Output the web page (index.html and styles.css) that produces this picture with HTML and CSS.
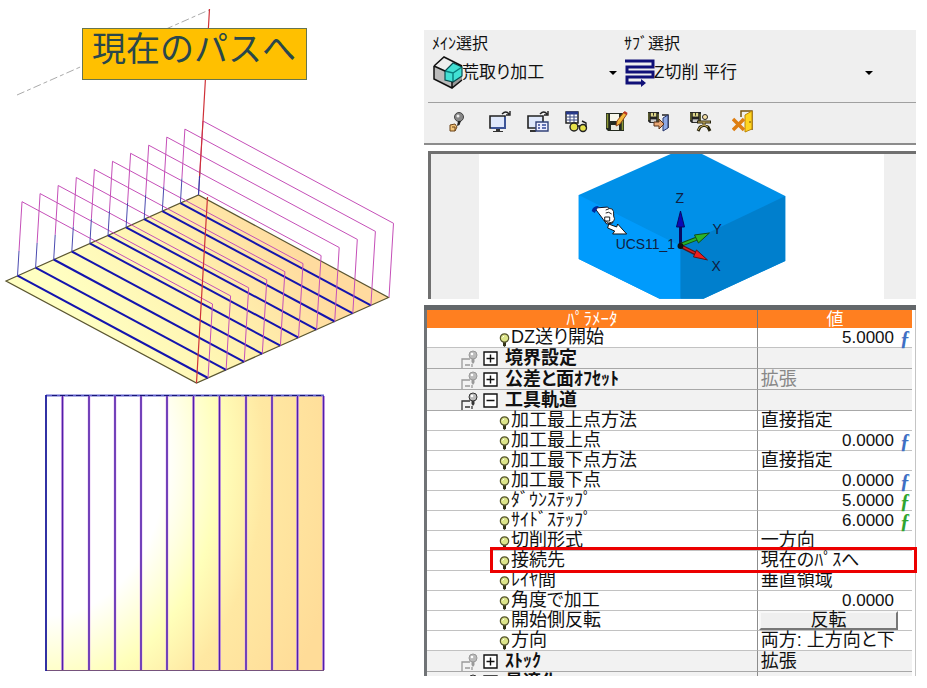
FILE: index.html
```html
<!DOCTYPE html>
<html lang="ja">
<head>
<meta charset="utf-8">
<title>現在のパスへ</title>
<link rel="stylesheet" href="styles.css">
</head>
<body>
<main class="page">
  <section class="figure">
    <h1 class="callout">現在のパスへ</h1>
    <svg class="drawing" viewBox="0 0 424 688" aria-hidden="true">
      <defs>
        <linearGradient id="plate" gradientUnits="userSpaceOnUse" x1="90" y1="330" x2="270" y2="210">
          <stop offset="0" stop-color="#ffffc2"/><stop offset=".5" stop-color="#fff3b0"/><stop offset="1" stop-color="#ffdb9f"/>
        </linearGradient>
        <radialGradient id="sheet" gradientUnits="userSpaceOnUse" cx="0" cy="0" r="1" gradientTransform="translate(46 460) scale(300 390)">
          <stop offset="0" stop-color="#fff"/><stop offset=".4" stop-color="#fff"/><stop offset=".58" stop-color="#ffffba"/><stop offset=".73" stop-color="#ffe8a2"/><stop offset="1" stop-color="#ffdc98"/>
        </radialGradient>
        <g id="retract" fill="none">
          <path d="M19 251 22 201.7 212.5 304 208 378" stroke="#c54fb8"/>
          <path d="M17.5 275.7 19 251" stroke="#4b4bb0"/>
        </g>
        <path id="cut" d="M17.5 275.7 208 378" stroke="#1414ae" stroke-width="2"/>
      </defs>
      <path d="M6 281 198.5 195 388.5 297.5 196.5 383Z" fill="url(#plate)" stroke="#5a5530" stroke-width="1.2"/>
      <path d="M17 95 209 10" stroke="#aaa" stroke-dasharray="8 3 4 3"/>
      <use href="#cut"/><use href="#cut" x="18.1" y="-8.1"/><use href="#cut" x="36.2" y="-16.2"/><use href="#cut" x="54.3" y="-24.2"/><use href="#cut" x="72.4" y="-32.3"/><use href="#cut" x="90.5" y="-40.4"/><use href="#cut" x="108.6" y="-48.4"/><use href="#cut" x="126.7" y="-56.5"/><use href="#cut" x="144.8" y="-64.6"/><use href="#cut" x="162.9" y="-72.6"/>
      <use href="#retract"/><use href="#retract" x="18.1" y="-8.1"/><use href="#retract" x="36.2" y="-16.2"/><use href="#retract" x="54.3" y="-24.2"/><use href="#retract" x="72.4" y="-32.3"/><use href="#retract" x="90.5" y="-40.4"/><use href="#retract" x="108.6" y="-48.4"/><use href="#retract" x="126.7" y="-56.5"/><use href="#retract" x="144.8" y="-64.6"/><use href="#retract" x="162.9" y="-72.6"/><use href="#retract" x="181" y="-80.7"/>
      <path d="M209.5 9 203 121 199.5 178M207.5 197 196.5 383" fill="none" stroke="#cf3138" stroke-width="1.2"/>
      <path d="M199.5 176 198.5 195" stroke="#3b35a4"/>
      <path d="M46 396H323V670H46Z" fill="url(#sheet)"/>
      <path d="M46 670.5H324" stroke="#76527c"/>
      <path d="M46 395.5H324" stroke="#6060cc" stroke-width="2"/>
      <path d="M52 395.5H324" stroke="#171778" stroke-dasharray="5 3"/>
      <path d="M62.5 396V670M89 396V670M115 396V670M141 396V670M167 396V670M193.5 396V670M219.5 396V670M246 396V670M272 396V670M297.5 396V670M323.5 396V670" stroke="#dca8f0" stroke-width="2.6"/>
      <path d="M62.5 396V670M89 396V670M115 396V670M141 396V670M167 396V670M193.5 396V670M219.5 396V670M246 396V670M272 396V670M297.5 396V670M323.5 396V670" stroke="#5020a8" stroke-width="1.5"/>
      <path d="M46 395V671" stroke="#1b1b9b" stroke-width="1.8"/>
    </svg>
  </section>

  <section class="panel">
    <svg width="0" height="0" class="sprites" aria-hidden="true">
      <symbol id="bulb" viewBox="0 0 11 14">
        <path d="M4 8h3v4.5L5.5 14 4 12.5Z" fill="#33331a"/>
        <circle cx="5.5" cy="5" r="4.2" fill="#dde58a" stroke="#55552c" stroke-width="1.2"/>
        <path d="M3.5 4.5 5 3" stroke="#fff"/>
      </symbol>
      <symbol id="branch" viewBox="0 0 20 18">
        <path d="M1 18V9H9M4 15H9M11 14V17" fill="none" stroke="currentColor" stroke-width="1.3"/>
        <path d="M10.5 8h3v4l-1.5 2-1.5-2Z" fill="currentColor"/>
        <circle cx="12" cy="5" r="4" fill="#bbb" stroke="currentColor"/>
        <circle cx="11" cy="4" r="1.3" fill="#fff"/>
      </symbol>
      <symbol id="plus" viewBox="0 0 15 15"><path d="M1 1H14V14H1ZM3.5 7.5H11.5M7.5 3.5V11.5" fill="#fff" stroke="#111" stroke-width="1.4"/></symbol>
      <symbol id="minus" viewBox="0 0 15 15"><path d="M1 1H14V14H1ZM3.5 7.5H11.5" fill="#fff" stroke="#111" stroke-width="1.4"/></symbol>
      <symbol id="disk" viewBox="0 0 12 12">
        <path d="M0 0H12V12H2L0 10Z" fill="#222"/><path d="M3 1H9V5H3Z" fill="#ddd68a"/><path d="M1 1V9M11 2V11" stroke="#8a8c3a"/><path d="M3 8H9V11H3Z" fill="#ccc"/><path d="M6 1V4" stroke="#222"/>
      </symbol>
    </svg>

    <form class="choices">
      <div class="choice choice-main">
        <label for="main-choice">ﾒｲﾝ選択</label>
        <div class="combo">
          <svg class="combo-icon" viewBox="0 0 32 34" aria-hidden="true">
            <path d="M2 10 12 1 31 10 20 18Z" fill="#eee"/><path d="M2 10 20 18V32L2 23Z" fill="#bbb"/><path d="M20 18 30 10V24L20 32Z" fill="#999"/>
            <path d="M13 15 21 7 30 11V20L21 26 13 24Z" fill="#42e0d4"/>
            <path d="M13 15 21 17 30 11M21 17V26" fill="none" stroke="#087c7c" stroke-width="1.4"/>
            <path d="M13 15V24L21 26 30 20V11L21 7Z" fill="none" stroke="#064d50" stroke-width="1.2"/>
            <path d="M2 10 12 1 30 10M2 10V23L20 32 30 24M2 10 13 15M20 26V32" fill="none" stroke="#111" stroke-width="1.5"/>
          </svg>
          <select id="main-choice"><option>荒取り加工</option></select>
          <svg class="arrow" viewBox="0 0 8 4" aria-hidden="true"><path d="M0 0H8L4 4Z"/></svg>
        </div>
      </div>
      <div class="choice choice-sub">
        <label for="sub-choice">ｻﾌﾞ選択</label>
        <div class="combo">
          <svg class="combo-icon" viewBox="0 0 32 34" aria-hidden="true">
            <path d="M1 5H29V11H3V16H29V21H3V27H20" fill="none" stroke="#101078" stroke-width="3"/><path d="M17 23 22 27 17 31Z" fill="#101078"/>
          </svg>
          <select id="sub-choice"><option>Z切削 平行</option></select>
          <svg class="arrow" viewBox="0 0 8 4" aria-hidden="true"><path d="M0 0H8L4 4Z"/></svg>
        </div>
      </div>
    </form>

    <div class="toolbar">
      <button type="button" aria-label="表示"><svg viewBox="0 0 24 24"><circle cx="14" cy="7" r="4.5" fill="#888" stroke="#444"/><circle cx="13" cy="6" r="1.5" fill="#eee"/><path d="M13 11 16 11 14.5 15 12 16" fill="#222"/><path d="M5 15 10 14 12 17 10 21 5 21Z" fill="#f4c579" stroke="#6b4219"/><path d="M7 17H10V21" fill="none" stroke="#6b4219"/></svg></button>
      <button type="button" aria-label="画面"><svg viewBox="0 0 24 24"><path d="M1 6H16V18H1Z" fill="#dfe8fb" stroke="#222" stroke-width="1.6"/><path d="M16 7V18H2" fill="none" stroke="#3d5598" stroke-width="2"/><path d="M7 19H11V21H14V22H4V21H7Z" fill="#333"/><path d="M13 4Q17 0 20 4M21 1V5H17" fill="none" stroke="#222" stroke-width="1.4"/></svg></button>
      <button type="button" aria-label="画面一覧"><svg viewBox="0 0 24 24"><path d="M1 6H16V18H1Z" fill="#dfe8fb" stroke="#222" stroke-width="1.6"/><path d="M3 21H9" stroke="#333" stroke-width="2"/><path d="M13 4Q17 0 20 4M21 1V5H17" fill="none" stroke="#222" stroke-width="1.4"/><path d="M9 12H21V21H9Z" fill="#eef" stroke="#33437a" stroke-width="1.4"/><path d="M11 15H13M15 15H19M11 18H13M15 18H19" stroke="#334a9a" stroke-width="1.5"/></svg></button>
      <button type="button" aria-label="表を見る"><svg viewBox="0 0 24 24"><path d="M1 2H13V13H1Z" fill="#fff" stroke="#222" stroke-width="1.5"/><path d="M1 3H13" stroke="#24378a" stroke-width="3"/><path d="M1 7H13M1 10H13M5 3V13M9 3V13" stroke="#3b4b82"/><circle cx="9" cy="17" r="4" fill="#e6e14b" stroke="#222" stroke-width="1.4"/><circle cx="18" cy="18" r="3.5" fill="#e6e14b" stroke="#222" stroke-width="1.4"/><path d="M12 16H15M17 11 21 13V17" fill="none" stroke="#222" stroke-width="1.4"/></svg></button>
      <button type="button" aria-label="保存"><svg viewBox="0 0 24 24"><path d="M1 3H19V21H3L1 19Z" fill="#252b20"/><path d="M5 4H14V11H5Z" fill="#f7f7eb"/><path d="M2.5 4V18M17.5 9V20" stroke="#8b9634" stroke-width="1.5"/><path d="M6 15H14V20H6Z" fill="#e8e8dd"/><path d="M11 16 12 11 19 2 22 4 15 14Z" fill="#f2b83c" stroke="#8f461b"/><path d="M19 2 22 4" stroke="#bf3724" stroke-width="2.5"/></svg></button>
      <button type="button" aria-label="保存して終了"><svg viewBox="0 0 24 24"><use href="#disk" x="1" y="2" width="11" height="11"/><path d="M15 5H21V18" fill="none" stroke="#222" stroke-width="1.5"/><path d="M16 8 21 5V18L16 21Z" fill="#8faae5" stroke="#26356d"/><path d="M7 12H12V9L17 14 12 19V16H7Z" fill="#e8a776" stroke="#573017"/></svg></button>
      <button type="button" aria-label="保存して計算"><svg viewBox="0 0 24 24"><use href="#disk" x="0" y="2" width="11" height="11"/><circle cx="15" cy="7" r="2.5" fill="#f8e2a6" stroke="#222"/><path d="M7 12H21M14 12V15L10 17 8 21M14 15 18 17 20 21" fill="none" stroke="#29250e" stroke-width="3"/><path d="M8 12H20M14 12V15L10 17 8 20M14 15 18 17" fill="none" stroke="#d9bd68"/></svg></button>
      <button type="button" aria-label="閉じる"><svg viewBox="0 0 24 24"><path d="M9 7V1H20V20" fill="none" stroke="#74520f" stroke-width="1.5"/><path d="M13 5 20 1V19L13 22Z" fill="#ffd51f" stroke="#bd8607"/><path d="M18 11V13" stroke="#714708"/><path d="M1 9 12 20M12 9 1 20" stroke="#de7e12" stroke-width="3.5"/></svg></button>
    </div>

    <div class="preview">
      <svg class="scene" viewBox="478 154 406 145" role="img" aria-label="UCS11_1">
        <path d="M672 153H700L785 196V261L703 299H659L578 259V195Z" fill="#0090e8"/>
        <path d="M578 195 680 246V299H659L578 259Z" fill="#009bfc"/>
        <path d="M680 246 785 196V261L703 299H680Z" fill="#007fcd"/>
        <path d="M594 208 607 207 613 214 612 223 606 224Z" fill="#fff" stroke="#112"/>
        <path d="M591 211Q592 206 598 206L594 213Z" fill="#002a9c"/>
        <path d="M605 210Q614 205 613 216Q616 222 608 223L603 220" fill="#fff" stroke="#222"/>
        <path d="M604 217H609V221H604ZM605 213Q608 211 611 214" fill="none" stroke="#222"/>
        <path d="M608 224 616 227 617 224 626 234 612 234 614 231 607 228Z" fill="#fff" stroke="#111"/>
        <path d="M680 245V225" stroke="#08085f" stroke-width="3"/><path d="M676 227 680 211 684 227Z" fill="#0a0ab5" stroke="#08085f"/>
        <path d="M680 245 698 238" stroke="#124b16" stroke-width="4"/><path d="M680 245 698 238" stroke="#27b329" stroke-width="2"/><path d="M694 235 709 233 698 243Z" fill="#2bb429" stroke="#124b16"/>
        <path d="M680 246 696 254" stroke="#51161a" stroke-width="4"/><path d="M680 246 696 254" stroke="#e11d1d" stroke-width="1.5"/><path d="M696 250 707 260 693 257Z" fill="#ed1d1d" stroke="#51161a"/>
        <circle cx="680" cy="246" r="3" fill="#111"/>
        <g class="axis"><text x="675" y="203">Z</text><text x="712" y="234">Y</text><text x="711" y="271">X</text><text x="615" y="249">UCS11_1</text></g>
      </svg>
    </div>

    <div class="grid">
      <table>
        <colgroup><col class="col-name"><col class="col-value"></colgroup>
        <thead><tr><th scope="col">ﾊﾟﾗﾒｰﾀ</th><th scope="col">値</th></tr></thead>
        <tbody>
          <tr><td><span class="item"><svg><use href="#bulb"/></svg>DZ送り開始</span></td><td><span class="number">5.0000<i>ƒ</i></span></td></tr>
          <tr class="group muted"><td><span class="item"><svg><use href="#branch"/></svg><button type="button" aria-label="開く"><svg><use href="#plus"/></svg></button>境界設定</span></td><td></td></tr>
          <tr class="group muted"><td><span class="item"><svg><use href="#branch"/></svg><button type="button" aria-label="開く"><svg><use href="#plus"/></svg></button>公差と面ｵﾌｾｯﾄ</span></td><td class="dim">拡張</td></tr>
          <tr class="group"><td><span class="item"><svg><use href="#branch"/></svg><button type="button" aria-label="閉じる"><svg><use href="#minus"/></svg></button>工具軌道</span></td><td></td></tr>
          <tr><td><span class="item"><svg><use href="#bulb"/></svg>加工最上点方法</span></td><td>直接指定</td></tr>
          <tr><td><span class="item"><svg><use href="#bulb"/></svg>加工最上点</span></td><td><span class="number">0.0000<i>ƒ</i></span></td></tr>
          <tr><td><span class="item"><svg><use href="#bulb"/></svg>加工最下点方法</span></td><td>直接指定</td></tr>
          <tr><td><span class="item"><svg><use href="#bulb"/></svg>加工最下点</span></td><td><span class="number">0.0000<i>ƒ</i></span></td></tr>
          <tr><td><span class="item"><svg><use href="#bulb"/></svg>ﾀﾞｳﾝｽﾃｯﾌﾟ</span></td><td><span class="number own">5.0000<i>ƒ</i></span></td></tr>
          <tr><td><span class="item"><svg><use href="#bulb"/></svg>ｻｲﾄﾞｽﾃｯﾌﾟ</span></td><td><span class="number own">6.0000<i>ƒ</i></span></td></tr>
          <tr><td><span class="item"><svg><use href="#bulb"/></svg>切削形式</span></td><td>一方向</td></tr>
          <tr class="marked"><td><span class="item"><svg><use href="#bulb"/></svg>接続先</span></td><td>現在のﾊﾟｽへ</td></tr>
          <tr><td><span class="item"><svg><use href="#bulb"/></svg>ﾚｲﾔ間</span></td><td>垂直領域</td></tr>
          <tr><td><span class="item"><svg><use href="#bulb"/></svg>角度で加工</span></td><td><span class="number">0.0000<i></i></span></td></tr>
          <tr><td><span class="item"><svg><use href="#bulb"/></svg>開始側反転</span></td><td class="action"><button type="button">反転</button></td></tr>
          <tr><td><span class="item"><svg><use href="#bulb"/></svg>方向</span></td><td>両方: 上方向と下</td></tr>
          <tr class="group muted"><td><span class="item"><svg><use href="#branch"/></svg><button type="button" aria-label="開く"><svg><use href="#plus"/></svg></button>ｽﾄｯｸ</span></td><td>拡張</td></tr>
          <tr class="group"><td><span class="item"><svg><use href="#branch"/></svg><button type="button" aria-label="開く"><svg><use href="#plus"/></svg></button>最適化</span></td><td></td></tr>
        </tbody>
      </table>
    </div>
  </section>
</main>
</body>
</html>
```
FILE: styles.css
```css
* { box-sizing: border-box; }

body {
  margin: 0;
  background: #fff;
  color: #111;
  font-family: "Liberation Sans", "Noto Sans CJK JP", sans-serif;
  font-size: 17px;
  line-height: 20px;
  font-feature-settings: "palt";
}

button, select { font: inherit; color: inherit; }

.page {
  display: grid;
  grid-template-columns: minmax(0, 424fr) minmax(0, 492fr);
  height: 100vh;
  padding-right: 11px;
}

.figure { position: relative; }
.drawing { display: block; width: 100%; }

.callout {
  position: absolute;
  top: 28px;
  left: 82px;
  margin: 0;
  padding: 0 10px 10px 9px;
  border: 1px solid #66754f;
  background: #ffc000;
  color: #29474c;
  font-size: 34px;
  font-weight: 400;
  line-height: 40px;
  white-space: nowrap;
  font-feature-settings: normal;
}

.panel {
  display: flex;
  flex-direction: column;
  min-height: 0;
  margin: 30px 0 12px;
  background: #efefef;
}
.sprites { position: absolute; }

.choices {
  display: grid;
  grid-template-columns: 188fr 252fr 36fr;
  gap: 4px;
  height: 73px;
  margin-left: 4px;
  padding: 4px 0 0 4px;
  border-bottom: 1px solid #a0a0a0;
}
.choice label { display: block; font-size: 16px; }
.combo { display: flex; align-items: center; height: 38px; }
.combo-icon { flex: none; width: 32px; height: 34px; }
.combo select {
  flex: 1;
  min-width: 0;
  margin-left: -2px;
  padding: 0;
  border: 0;
  background: none;
  appearance: none;
}
.arrow { flex: none; width: 8px; height: 4px; margin-right: 3px; }

.toolbar {
  display: grid;
  grid-template-columns: 44px 38px 38px 40px 42px 43px 42px 24px;
  align-items: center;
  height: 42px;
  padding: 0 0 2px 21px;
  border-bottom: 2px solid #8c8c8c;
}
.toolbar button {
  width: 24px;
  height: 24px;
  padding: 0;
  border: 0;
  background: none;
}
.toolbar svg { display: block; width: 24px; height: 24px; }

.preview {
  padding: 6px 0 6px 4px;
  background: #fff;
  border-bottom: 5px solid #63676a;
}
.scene {
  display: block;
  width: 100%;
  height: 148px;
  padding: 0 32px 0 48px;
  border-top: 3px solid #707070;
  border-left: 3px solid #707070;
  background: linear-gradient(#fff, #fff) content-box, #efefef;
}
.axis { font-size: 14px; fill: #102040; }

.grid {
  flex: 1;
  min-height: 0;
  overflow-x: visible;
  overflow-y: clip;
  padding-right: 4px;
  border-left: 3px solid #707376;
  background: linear-gradient(#c4c4c4, #c4c4c4) right / 1px 100% no-repeat #fff;
}
table {
  width: 100%;
  border-collapse: separate;
  border-spacing: 0;
  table-layout: fixed;
}
.col-name { width: 68%; }
th {
  height: 18px;
  padding: 0;
  background: #ff7f20;
  color: #fff;
  font-weight: 400;
  line-height: 17px;
}
th + th { border-left: 1px solid #777; }
td {
  height: 20px;
  padding: 0 0 0 72px;
  border-bottom: 1px solid #c2c2c2;
  line-height: 19px;
  font-size: 18px;
  white-space: nowrap;
}
td + td { padding: 0 0 0 3px; border-left: 1px solid #8c8c8c; }

.item { display: flex; align-items: center; height: 19px; gap: 1px; }
.item > svg { flex: none; width: 11px; height: 14px; margin-top: 4px; }

.group td { height: 21px; background: #f2f2f2; border-bottom-color: #a8a8a8; }
.group td:first-child { padding-left: 34px; font-weight: 700; }
.group .item { gap: 2px; }
.group .item > svg { width: 20px; height: 18px; margin-top: 2px; color: #333; }
.group.muted .item > svg { color: #999; }
.item button {
  flex: none;
  width: 15px;
  height: 15px;
  margin-right: 5px;
  padding: 0;
  border: 0;
  background: none;
}
.item button svg { display: block; width: 15px; height: 15px; }
td.dim { color: #888; }

.number { display: flex; justify-content: flex-end; height: 19px; font-size: 17px; }
.number i {
  width: 18px;
  padding-left: 6px;
  color: #3f6fc4;
  font: italic 700 20px/20px "Liberation Serif", serif;
}
.number.own i { color: #2fa52f; }

td.action { padding: 0 14px 0 1px; }
.action button {
  display: block;
  width: 100%;
  height: 19px;
  padding: 0;
  border: 2px solid;
  border-color: #f8f8f8 #777 #777 #f8f8f8;
  background: #efefef;
  line-height: 15px;
}

.marked { position: relative; }
.marked td:last-child::after {
  content: "";
  position: absolute;
  inset: -4px -5px -2px 63px;
  border: 3px solid #ec0000;
}
```
